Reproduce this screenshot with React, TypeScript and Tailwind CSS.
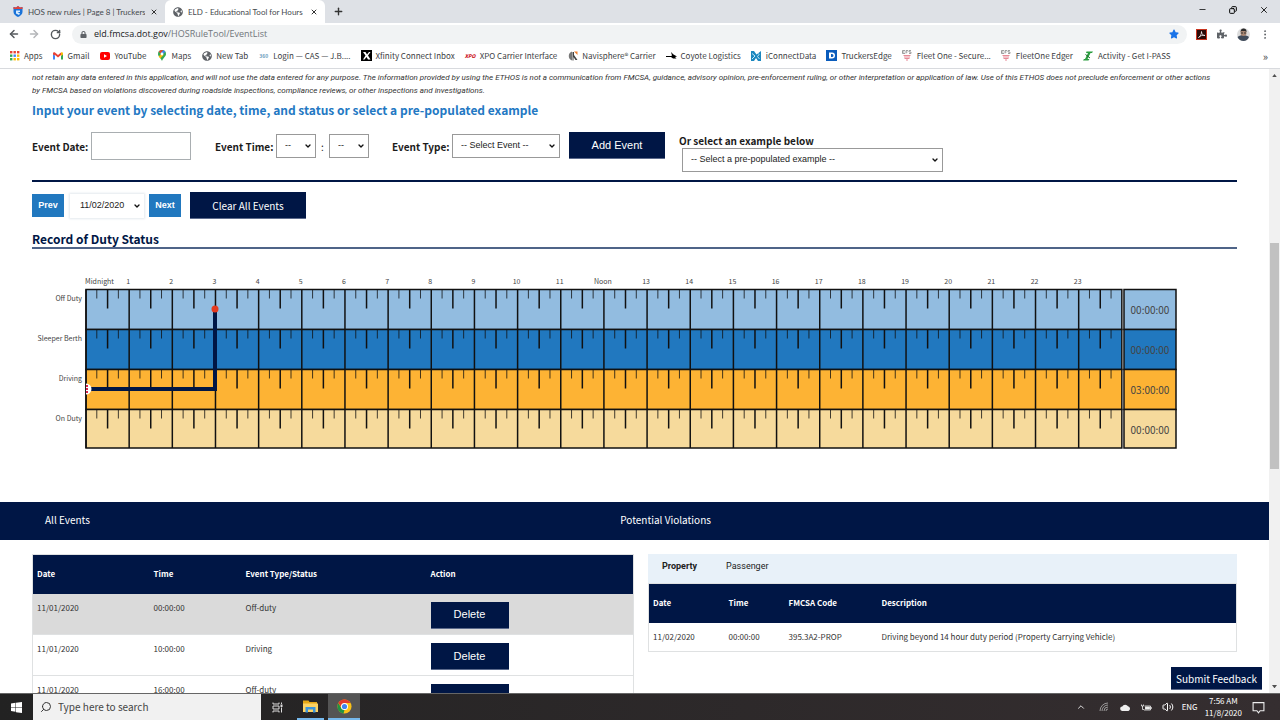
import clsx from 'clsx';
import { ArrowLeft, ArrowRight, ChevronDown, ChevronUp, Copy, Minus, Plus, RotateCw, Search, Volume2, X } from 'lucide-react';
import type { ReactNode } from 'react';
import { FaGlobeAmericas, FaLock, FaPuzzlePiece, FaStar } from 'react-icons/fa';

const bookmarks = [
  { label: 'Apps', icon: <AppsIcon /> },
  { label: 'Gmail', icon: <GmailIcon /> },
  { label: 'YouTube', icon: <YouTubeIcon /> },
  { label: 'Maps', icon: <MapsIcon /> },
  { label: 'New Tab', icon: <FaGlobeAmericas className="size-[10px] text-[#5f6368]" /> },
  { label: 'Login — CAS — J.B....', icon: <span className="text-[5px] font-bold text-[#6a9cbc]">360</span> },
  { label: 'Xfinity Connect Inbox', icon: <XfinityIcon /> },
  { label: 'XPO Carrier Interface', icon: <span className="text-[5px] font-black italic text-[#cc1122]">XPO</span> },
  { label: 'Navisphere® Carrier', icon: <NavisphereIcon /> },
  { label: 'Coyote Logistics', icon: <CoyoteIcon /> },
  { label: 'iConnectData', icon: <ConnectIcon /> },
  { label: 'TruckersEdge', icon: <EdgeIcon /> },
  { label: 'Fleet One - Secure...', icon: <EfsIcon /> },
  { label: 'FleetOne Edger', icon: <EfsIcon /> },
  { label: 'Activity - Get I-PASS', icon: <IPassIcon /> },
];

const dutyRows = [
  { label: 'Off Duty', total: '00:00:00', color: '#92bce0' },
  { label: 'Sleeper Berth', total: '00:00:00', color: '#2178bf' },
  { label: 'Driving', total: '03:00:00', color: '#fdb334' },
  { label: 'On Duty', total: '00:00:00', color: '#f6da9c' },
];

const events = [
  { date: '11/01/2020', time: '00:00:00', status: 'Off-duty' },
  { date: '11/01/2020', time: '10:00:00', status: 'Driving' },
  { date: '11/01/2020', time: '16:00:00', status: 'Off-duty' },
];

function AppsIcon() {
  const colors = ['#ea4335', '#ea4335', '#ea4335', '#34a853', '#4285f4', '#fbbc05', '#34a853', '#fbbc05', '#fbbc05'];
  return (
    <svg viewBox="0 0 10 10" className="size-[10px]">
      {colors.map((c, i) => (
        <rect key={i} x={(i % 3) * 3.5} y={Math.floor(i / 3) * 3.5} width="2.4" height="2.4" fill={c} />
      ))}
    </svg>
  );
}

function GmailIcon() {
  return (
    <svg viewBox="0 0 20 16" className="w-[10px]">
      <path d="M0 3v12h4V7z" fill="#4285f4" />
      <path d="M20 3v12h-4V7z" fill="#34a853" />
      <path d="M0 3c0-3 3-3 4-2l6 5 6-5v5l-6 5-6-5v1L0 5z" fill="#ea4335" />
      <path d="M16 1c2-1 4 0 4 2v2l-4 3z" fill="#fbbc05" />
    </svg>
  );
}

function YouTubeIcon() {
  return (
    <svg viewBox="0 0 20 16" className="w-[10px]">
      <rect width="20" height="16" rx="4" fill="#f00" />
      <path d="M8 4.5v7l6-3.5z" fill="#fff" />
    </svg>
  );
}

function MapsIcon() {
  return (
    <svg viewBox="0 0 16 22" className="h-[11px]">
      <path d="M8 0a8 8 0 0 0-8 8c0 5 6 8 8 14 2-6 8-9 8-14a8 8 0 0 0-8-8z" fill="#34a853" />
      <path d="M8 0a8 8 0 0 0-6.500 3.300L5 7l5.500-6.500z" fill="#ea4335" />
      <path d="M10.500.5L5 7l3 3 6.500-6.500A8 8 0 0 0 10.500.5z" fill="#4285f4" />
      <path d="M1.500 13L8 6l3 4-6.500 7z" fill="#fbbc05" />
      <circle cx="8" cy="8" r="2.800" fill="#fff" />
    </svg>
  );
}

function XfinityIcon() {
  return (
    <svg viewBox="0 0 22 22" className="size-[11px]">
      <rect width="22" height="22" fill="#000" />
      <path d="M4 4h5l3 5 4-5h3l-5 7 5 8h-5l-3-5-4 5H4l5-8z" fill="#fff" />
    </svg>
  );
}

function NavisphereIcon() {
  return (
    <svg viewBox="0 0 20 20" className="size-[10px]">
      <path d="M8 1a9.500 9.500 0 0 0 0 18z" fill="#777" />
      <path d="M9 2h3v6l7 10h-4l-4-6v7H9z" fill="#444" />
      <path d="M12 1h7v7z" fill="#f08030" />
    </svg>
  );
}

function CoyoteIcon() {
  return (
    <svg viewBox="0 0 22 14" className="w-[11px]">
      <path d="M10 0l5 5 7 4-4 1 3 3h-7l-4-3H0V8h10l2-1z" fill="#000" />
    </svg>
  );
}

function ConnectIcon() {
  return (
    <svg viewBox="0 0 20 20" className="size-[10px]">
      <path d="M0 0h6l5 7 9-7v20h-6l-4-6-4 6H0z" fill="#1b87bf" />
      <path d="M2 5l6 5-6 6M13 4l3 3-3 4 4 5" stroke="#c4e8f8" strokeWidth="2" fill="none" />
    </svg>
  );
}

function EdgeIcon() {
  return (
    <svg viewBox="0 0 22 22" className="size-[11px]">
      <rect width="22" height="22" fill="#0a5cbc" />
      <path d="M6 5h6a6 6 0 0 1 0 12H6zM10 8v6h2a3 3 0 0 0 0-6z" fill="#fff" fillRule="evenodd" />
    </svg>
  );
}

function EfsIcon() {
  return (
    <svg viewBox="0 0 20 22" className="w-[10px]">
      <path d="M1 1h5M1 4h4M1 7h5M1 1v6M8 7V1h4M8 4h3M18 1h-4v3h4v3h-4" stroke="#888" strokeWidth="1.600" fill="none" />
      <path d="M3 11h14M4 14h12M5 17h10M8 20h4" stroke="#e88a97" strokeWidth="2" />
    </svg>
  );
}

function IPassIcon() {
  return (
    <svg viewBox="0 0 20 20" className="size-[10px]">
      <path d="M7 1h13l-2 3h-3L9 16h4l-2 3H0l2-3h2l6-12H6z" fill="#2a9d3f" />
      <path d="M5 7l9 7" stroke="#1d6b2c" strokeWidth="2" />
    </svg>
  );
}

function ShieldIcon() {
  return (
    <svg viewBox="0 0 20 22" className="h-[11px] shrink-0">
      <path d="M1 2l5 1 4-3 4 3 5-1v10c0 5-5 8-9 10-4-2-9-5-9-10z" fill="#1a73d8" />
      <path d="M1 2l5 1 4-3 4 3 5-1v4H1z" fill="#e2433b" />
      <path d="M6 9h8v3H9l5 3-2 3-6-3z" fill="#d8ecff" />
    </svg>
  );
}

function AcrobatIcon() {
  return (
    <svg viewBox="0 0 22 22" className="size-[11px]">
      <rect x="1" y="1" width="20" height="20" fill="#2a0a08" stroke="#c8341f" strokeWidth="2" />
      <path d="M5 17c4-2 6-7 6-12 0 5 3 8 7 8-5-1-9 0-13 4z" fill="none" stroke="#fff" strokeWidth="1.500" />
    </svg>
  );
}

function AvatarIcon() {
  return (
    <svg viewBox="0 0 26 26" className="size-[13px]">
      <circle cx="13" cy="13" r="13" fill="#dcdcdc" />
      <path d="M1 18c4-3 8-4 12-4s9 2 11 4c-2 5-6 8-11 8S3 23 1 18z" fill="#3f4b5a" />
      <circle cx="13" cy="10" r="6" fill="#a88672" />
      <path d="M7 8c0-5 3-7 6-7s7 2 6 7l-3-2H9z" fill="#2b2b2b" />
      <path d="M8 9h4v2H8zM14 9h4v2h-4z" fill="#333" />
    </svg>
  );
}

function Select({ label, value, id, className }: { label: string; value: string; id: string; className: string }) {
  return (
    <span className={clsx('relative inline-flex bg-white', className)}>
      <select
        id={id}
        aria-label={label}
        className="h-full w-full appearance-none bg-white pl-2 font-['Liberation_Sans',sans-serif] text-[9px] font-normal text-[#222]"
      >
        <option>{value}</option>
      </select>
      <ChevronDown strokeWidth={4} className="pointer-events-none absolute top-1/2 right-[3px] size-2 -translate-y-1/2 text-[#111]" />
    </span>
  );
}

function NavyButton({ children, className }: { children: ReactNode; className?: string }) {
  return (
    <button className={clsx('border-b border-[#5c6a8c] bg-[#001645] text-white', className)}>{children}</button>
  );
}

function TabStrip() {
  return (
    <div className="flex h-[23px] shrink-0 items-stretch bg-[#dee1e6] font-['Lato',sans-serif] text-[8px] text-[#45494d]">
      <div className="flex w-[165px] items-center gap-[5px] pr-[7px] pl-[13px]">
        <ShieldIcon />
        <span className="flex-1 overflow-hidden whitespace-nowrap">HOS new rules | Page 8 | Truckers</span>
        <X strokeWidth={3} className="size-2 text-[#333]" />
      </div>
      <div className="flex w-[160px] items-center gap-[5px] rounded-t-md bg-white pr-[7px] pl-[8px]">
        <FaGlobeAmericas className="size-[10px] shrink-0 text-[#5f6368]" />
        <span className="flex-1 overflow-hidden whitespace-nowrap">ELD - Educational Tool for Hours</span>
        <X strokeWidth={3} className="size-2 text-[#333]" />
      </div>
      <button aria-label="New tab" className="px-2">
        <Plus strokeWidth={3} className="size-[11px] text-[#333]" />
      </button>
      <div className="ml-auto flex items-center gap-[22px] pr-[11px] pb-1 text-black">
        <Minus strokeWidth={2} className="size-[9px]" />
        <Copy strokeWidth={3} className="size-2 -scale-x-100" />
        <X strokeWidth={2} className="size-[10px]" />
      </div>
    </div>
  );
}

function Toolbar() {
  return (
    <div className="flex h-[22px] shrink-0 items-center bg-white pr-[14px] pl-2">
      <div className="flex w-16 items-center gap-2 text-[#55595d]">
        <ArrowLeft strokeWidth={3} className="size-3" />
        <ArrowRight strokeWidth={3} className="size-3 text-[#b4b6b9]" />
        <RotateCw strokeWidth={3} className="ml-[2px] size-[11px]" />
      </div>
      <div className="flex h-[19px] flex-1 items-center rounded-full bg-[#f1f3f4] px-2">
        <FaLock className="size-[7px] text-[#5f6368]" />
        <span className="ml-[7px] font-['Open_Sans',sans-serif] text-[9px] text-[#70757a]">
          <span className="text-[#202124]">eld.fmcsa.dot.gov</span>/HOSRuleTool/EventList
        </span>
        <FaStar className="ml-auto size-[10px] text-[#1a73e8]" />
      </div>
      <div className="ml-[9px] flex items-center gap-[10px] text-[#5f6368]">
        <AcrobatIcon />
        <FaPuzzlePiece className="size-[10px]" />
        <AvatarIcon />
        <svg viewBox="0 0 4 16" className="ml-1 h-[9px]" fill="#5f6368">
          <circle cx="2" cy="2" r="1.700" />
          <circle cx="2" cy="8" r="1.700" />
          <circle cx="2" cy="14" r="1.700" />
        </svg>
      </div>
    </div>
  );
}

function BookmarksBar() {
  return (
    <nav className="flex h-6 shrink-0 items-center gap-[10px] overflow-hidden border-b border-[#d8dade] bg-white pr-3 pb-[2px] pl-[9px] text-[8px] text-[#3c4043]">
      {bookmarks.map(b => (
        <a key={b.label} href="#" className="flex items-center gap-1 whitespace-nowrap">
          <span className="flex w-[11px] items-center justify-center">{b.icon}</span>
          {b.label}
        </a>
      ))}
      <span className="ml-auto text-[11px] leading-4">»</span>
    </nav>
  );
}

function EventForm() {
  return (
    <form className="mt-3 flex h-[50px] items-start border-b-2 border-[#001645] text-[10px] font-bold text-[#1b1b1b]">
      <div className="flex h-7 items-center">
        <label htmlFor="event-date" className="w-[59px] whitespace-nowrap">Event Date:</label>
        <input id="event-date" className="h-7 w-[100px] border border-[#a9aeb1] px-2 font-normal" />
        <label htmlFor="event-hour" className="ml-6 w-[61px] whitespace-nowrap">Event Time:</label>
        <Select id="event-hour" label="Event hour" value="--" className="h-6 w-10 border border-[#999]" />
        <span className="w-[13px] text-center font-normal">:</span>
        <Select id="event-minute" label="Event minute" value="--" className="h-6 w-10 border border-[#999]" />
        <label htmlFor="event-type" className="ml-[23px] w-[60px] whitespace-nowrap">Event Type:</label>
        <Select id="event-type" label="Event type" value="-- Select Event --" className="h-6 w-[108px] border border-[#999]" />
      </div>
      <NavyButton className="ml-[9px] h-[27px] w-24 font-['Liberation_Sans',sans-serif] text-[11px] font-normal">Add Event</NavyButton>
      <div className="ml-[14px] flex flex-col pt-[1px]">
        <label htmlFor="example" className="leading-[15px]">Or select an example below</label>
        <Select id="example" label="Example" value="-- Select a pre-populated example --" className="ml-[3px] h-6 w-[261px] border border-[#999]" />
      </div>
    </form>
  );
}

// Hour grid geometry, in svg units
const gridLeft = 54;
const hourWidth = 43.16;
const gridRight = gridLeft + hourWidth * 24;

function DutyChart() {
  return (
    <svg viewBox="0 0 1205 180" className="mt-6 block w-full" fontSize="7" fill="#444">
      {Array.from({ length: 24 }, (_, h) => (
        <text key={h} x={h === 0 ? 53 : gridLeft + h * hourWidth - 1} y="11" textAnchor={h === 0 ? 'start' : 'middle'}>
          {h === 0 ? 'Midnight' : h === 12 ? 'Noon' : h}
        </text>
      ))}
      {dutyRows.map((row, r) => {
        const y = 16.5 + r * 40;
        const height = r === 3 ? 38.5 : 40;
        return (
          <g key={row.label}>
            <text x="50" y={y + 11} textAnchor="end">{row.label}</text>
            <rect x={gridLeft} y={y} width={gridRight - gridLeft} height={height} fill={row.color} stroke="#111" strokeWidth="1.500" />
            {Array.from({ length: 96 }, (_, q) => (
              <line
                key={q}
                x1={gridLeft + (q * hourWidth) / 4}
                x2={gridLeft + (q * hourWidth) / 4}
                y1={y}
                y2={y + (q % 4 === 0 ? height : q % 2 === 0 ? 19 : 9)}
                stroke="#111"
                strokeWidth={q % 2 === 0 ? 1.5 : 0.8}
              />
            ))}
            <rect x="1092" y={y} width="52" height={height} fill={row.color} stroke="#111" strokeWidth="1.500" />
            <text x="1118" y={y + 24} textAnchor="middle" fontSize="10">{row.total}</text>
          </g>
        );
      })}
      <path d="M56 116H183V36" fill="none" stroke="#001645" strokeWidth="4" />
      <circle cx="183" cy="36" r="3.500" fill="#e63a1e" />
      <path d="M54 110.500a5.500 5.500 0 0 1 0 11z" fill="#fff" />
      <path d="M55 112v8" stroke="#d8244c" strokeWidth="2" strokeDasharray="2 1" />
    </svg>
  );
}

function EventsTable() {
  return (
    <table className="w-full table-fixed border border-[#dfe1e2] text-left text-[8px] text-[#333]">
      <thead className="bg-[#001645] text-white">
        <tr className="h-[39px]">
          <th className="w-[117px] pl-1">Date</th>
          <th className="w-[92px] pl-1">Time</th>
          <th className="w-[185px] pl-1">Event Type/Status</th>
          <th className="pl-1">Action</th>
        </tr>
      </thead>
      <tbody>
        {events.map((e, i) => (
          <tr key={i} className={clsx('h-[41px] border-b border-[#dfe1e2] align-top', i === 0 && 'bg-[#dadada]')}>
            <td className="pt-2 pl-1">{e.date}</td>
            <td className="pt-2 pl-1">{e.time}</td>
            <td className="pt-2 pl-1">{e.status}</td>
            <td className="pt-2 pl-1">
              <NavyButton className="block h-[27px] w-[78px] font-['Liberation_Sans',sans-serif] text-[11px]">Delete</NavyButton>
            </td>
          </tr>
        ))}
      </tbody>
    </table>
  );
}

function Violations() {
  return (
    <div>
      <div className="flex h-[29px] items-center gap-[29px] bg-[#e8f1f9] pb-1 pl-[14px] font-['Roboto',sans-serif] text-[9px] text-[#222]">
        <button className="font-bold">Property</button>
        <button>Passenger</button>
      </div>
      <table className="w-full table-fixed border border-[#dfe1e2] text-left text-[8px] text-[#333]">
        <thead className="bg-[#001645] text-white">
          <tr className="h-[39px]">
            <th className="w-[76px] pl-1">Date</th>
            <th className="w-[60px] pl-1">Time</th>
            <th className="w-[93px] pl-1">FMCSA Code</th>
            <th className="pl-1">Description</th>
          </tr>
        </thead>
        <tbody>
          <tr className="h-[29px]">
            <td className="pl-1">11/02/2020</td>
            <td className="pl-1">00:00:00</td>
            <td className="pl-1">395.3A2-PROP</td>
            <td className="pl-1">Driving beyond 14 hour duty period (Property Carrying Vehicle)</td>
          </tr>
        </tbody>
      </table>
    </div>
  );
}

function Taskbar() {
  return (
    <footer className="flex h-[27px] shrink-0 items-stretch border-t border-[#666] bg-linear-to-r from-[#222] to-[#352e30] text-white">
      <button aria-label="Start" className="flex w-[33px] items-center justify-center">
        <svg viewBox="0 0 22 22" className="size-[11px]" fill="#fff">
          <path d="M0 3l9-1.300V10H0zM10 1.500L22 0v10H10zM0 11h9v8.500L0 18zM10 11h12v11l-12-1.700z" />
        </svg>
      </button>
      <label className="flex w-[228px] items-center gap-[6px] bg-[#f1f1f1] pl-[7px] text-[#333]">
        <Search strokeWidth={2} className="size-3 -scale-x-100" />
        <input
          aria-label="Search"
          placeholder="Type here to search"
          className="w-40 bg-transparent pb-[2px] text-[10px] placeholder:text-[#444]"
        />
      </label>
      <button aria-label="Task view" className="flex w-8 items-center justify-center">
        <svg viewBox="0 0 22 22" className="size-[11px]" fill="none" stroke="#ddd" strokeWidth="2">
          <path d="M2 1v3h12V1M2 8h12v6H2zM2 21v-3h12v3M19 1v3M19 11v10" />
          <rect x="18" y="6" width="2" height="3" />
        </svg>
      </button>
      <button aria-label="File Explorer" className="mx-1 flex w-[27px] items-center justify-center border-b-2 border-[#76b9ed]">
        <svg viewBox="0 0 30 26" className="w-[15px]">
          <path d="M0 1h11l2 3h15v20H0z" fill="#e6a817" />
          <path d="M0 7h30v17H0z" fill="#fcd364" />
          <path d="M5 25V14h20v11h-5v-6H10v6z" fill="#3c96dc" />
        </svg>
      </button>
      <button aria-label="Chrome" className="flex w-8 items-center justify-center border-b-2 border-[#76b9ed] bg-[#545454]">
        <svg viewBox="0 0 32 32" className="size-[15px]">
          <circle cx="16" cy="16" r="15" fill="#fbc116" />
          <path d="M3 8.500A15 15 0 0 1 29 8.500H16z" fill="#e33b2e" />
          <path d="M3 8.500L9.500 20 16 23l-2 8A15 15 0 0 1 3 8.500z" fill="#229342" />
          <path d="M3 8.500A15 15 0 0 1 16 1v8a7 7 0 0 0-6 10z" fill="#e33b2e" />
          <circle cx="16" cy="16" r="7.500" fill="#fff" />
          <circle cx="16" cy="16" r="5.500" fill="#3f83f1" />
        </svg>
      </button>
      <div className="ml-auto flex items-center pr-[15px] text-[8px]">
        <ChevronUp className="mr-[13px] size-[10px]" />
        <svg viewBox="0 0 20 20" className="mr-[11px] size-[10px]" fill="none" stroke="#bbb" strokeWidth="1.500">
          <path d="M2 18A16 16 0 0 1 18 2M6 18A12 12 0 0 1 18 6M10 18a8 8 0 0 1 8-8M14 18a4 4 0 0 1 4-4" />
        </svg>
        <svg viewBox="0 0 22 14" className="mr-[10px] w-[11px]" fill="#eee">
          <path d="M5 14a4.500 4.500 0 0 1-.5-9A6.500 6.500 0 0 1 16 4.500 5 5 0 0 1 17 14z" />
        </svg>
        <svg viewBox="0 0 22 14" className="mr-[10px] w-[11px]" fill="none" stroke="#eee" strokeWidth="1.600">
          <path d="M7 4h12v8H6M19 7h2v2h-2M1 1v3h4V1M3 4v7h3" />
          <rect x="9" y="6" width="8" height="4" fill="#eee" />
        </svg>
        <Volume2 strokeWidth={2} className="mr-[8px] size-[12px]" />
        <span className="mr-[7px]">ENG</span>
        <span className="mr-[10px] text-center leading-3">
          7:56 AM
          <br />
          11/8/2020
        </span>
        <svg viewBox="0 0 24 24" className="size-[13px]" fill="none" stroke="#eee" strokeWidth="2">
          <path d="M2 3h20v15h-7l-3 4-3-4H2z" />
        </svg>
      </div>
    </footer>
  );
}

export default function App() {
  return (
    <div className="flex h-screen flex-col overflow-hidden bg-white font-['Noto_Sans_CJK_SC',sans-serif]">
      <TabStrip />
      <Toolbar />
      <BookmarksBar />

      <div className="relative flex min-h-0 flex-1">
        <main className="min-w-0 flex-1 overflow-hidden">
          <div className="px-8">
            <div className="flex h-7 flex-col justify-end overflow-hidden">
              <p className="font-['Roboto',sans-serif] text-[8px] leading-[13px] whitespace-nowrap text-[#333] italic">
                The Educational Tool for Hours of Service (ETHOS) is provided to help the public apply the property and passenger regulations. FMCSA does
                <br />
                not retain any data entered in this application, and will not use the data entered for any purpose. The information provided by using the ETHOS is not a communication from FMCSA, guidance, advisory opinion, pre-enforcement ruling, or other interpretation or application of law. Use of this ETHOS does not preclude enforcement or other actions
                <br />
                by FMCSA based on violations discovered during roadside inspections, compliance reviews, or other inspections and investigations.
              </p>
            </div>
            <h1 className="mt-[3px] text-[12px] leading-5 font-bold text-[#2378c3]">
              Input your event by selecting date, time, and status or select a pre-populated example
            </h1>
            <EventForm />

            <div className="mt-[10px] flex items-center font-['Liberation_Sans',sans-serif] text-[9px]">
              <button className="h-[23px] w-8 bg-[#2178bf] font-bold text-white">Prev</button>
              <Select id="day" label="Day" value="11/02/2020" className="ml-[6px] h-6 w-[74px] pl-[2px] shadow-[0_0_2px_1px_#e4e9ee]" />
              <button className="ml-[5px] h-[23px] w-8 bg-[#2178bf] font-bold text-white">Next</button>
              <NavyButton className="ml-[9px] h-[27px] w-[116px] font-['Noto_Sans_CJK_SC',sans-serif] text-[10px]">Clear All Events</NavyButton>
            </div>

            <h2 className="mt-[11px] border-b-2 border-[#4f6488] text-[12px] leading-[17px] font-bold text-[#001645]">
              Record of Duty Status
            </h2>
            <DutyChart />
          </div>

          <div className="mt-[49px] flex h-[38px] items-center bg-[#001645] pb-1 pl-[45px] text-[10px] text-white">
            <span className="w-[47%]">All Events</span>
            <span>Potential Violations</span>
          </div>

          <div className="mt-[14px] grid grid-cols-[602fr_589fr] items-start gap-[14px] px-8">
            <EventsTable />
            <Violations />
          </div>
        </main>

        {/* Page scrollbar */}
        <div className="flex w-[11px] flex-col items-center bg-[#f1f1f1]">
          <span className="h-[174px] pt-[5px]">
            <svg viewBox="0 0 6 4" className="w-[5px]" fill="#505050">
              <path d="M0 4l3-4 3 4z" />
            </svg>
          </span>
          <span className="h-[226px] w-[9px] bg-[#c1c1c1]" />
          <svg viewBox="0 0 6 4" className="mt-auto mb-[5px] w-[5px]" fill="#505050">
            <path d="M0 0l3 4 3-4z" />
          </svg>
        </div>

        <NavyButton className="absolute right-[18px] bottom-[3px] h-[23px] w-[91px] text-[10px]">Submit Feedback</NavyButton>
      </div>

      <Taskbar />
    </div>
  );
}
